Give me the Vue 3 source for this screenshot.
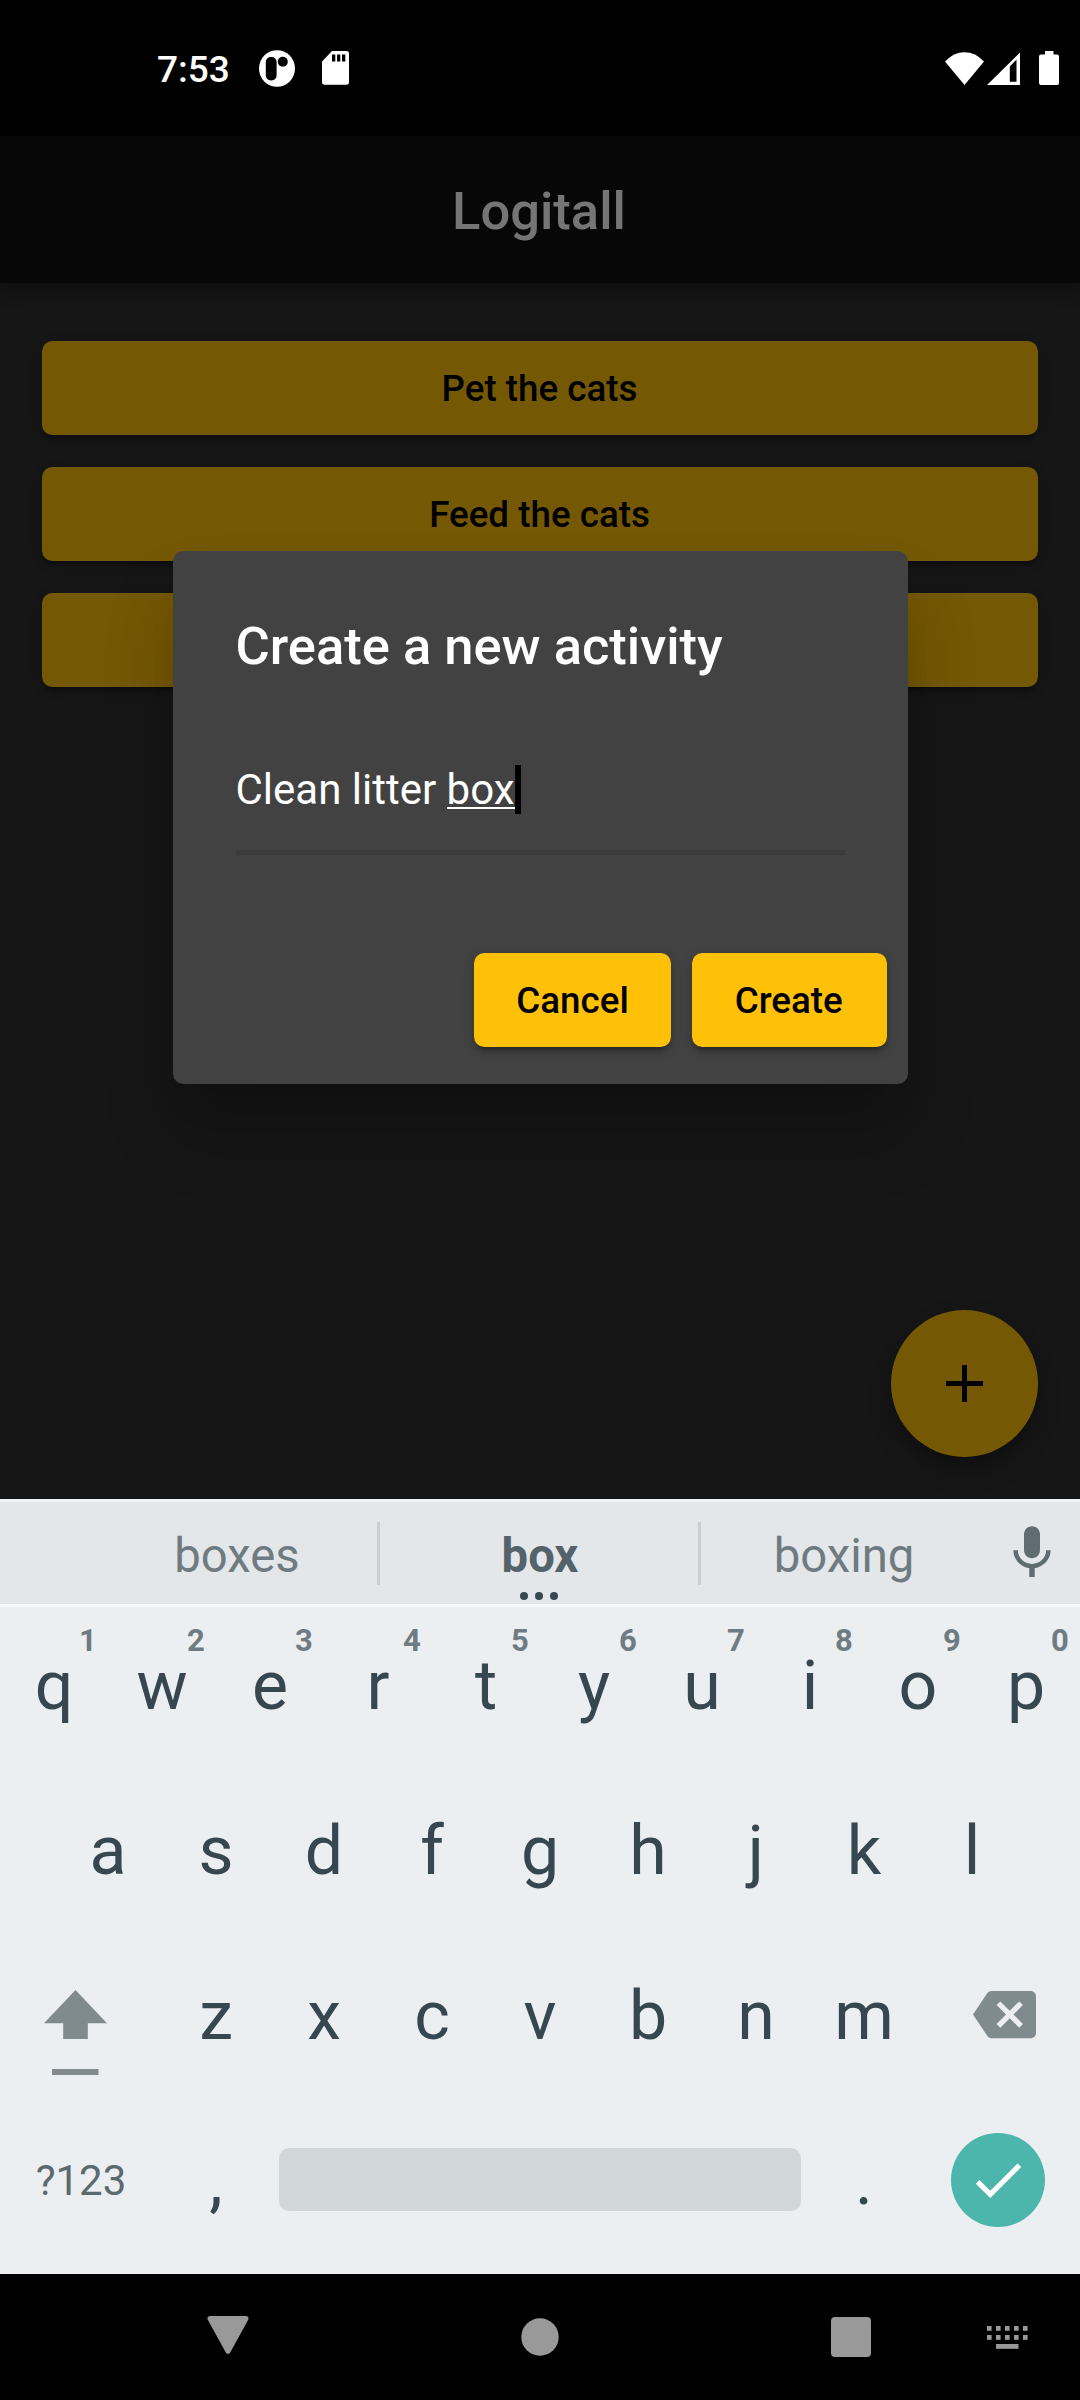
<script setup>
const activities = ['Pet the cats', 'Feed the cats', '']
const topRow = [...'qwertyuiop'].map((letter, i) => ({ letter, hint: (i + 1) % 10 }))
const homeRow = [...'asdfghjkl']
const bottomRow = [...'zxcvbnm']
</script>

<template>
  <div class="screen">
    <header class="status">
      <span class="clock">7:53</span>
      <svg class="ic-app" viewBox="0 0 36 37">
        <ellipse cx="18" cy="18.5" rx="18" ry="18.3" fill="#fff" />
        <rect x="6.8" y="7" width="10.8" height="23.4" rx="5" fill="#000" />
        <circle cx="23.8" cy="11.7" r="5" fill="#000" />
      </svg>
      <svg class="ic-sd" viewBox="0 0 27 34">
        <path d="M10 0H24.500Q27 0 27 2.500V31Q27 33.700 24.500 33.700H2.500Q0 33.700 0 31V10.500Z" fill="#fff" />
        <path d="M10 3.500h3.300v7H10zM15 3.500h3.300v7H15zM20 3.500h3.300v7H20z" fill="#000" />
      </svg>
      <span class="spacer"></span>
      <svg class="ic-wifi" viewBox="0 0 39 33">
        <path d="M19.500 33L0 9.500Q8.500 0.200 19.500 0.200T39 9.500Z" fill="#fff" />
      </svg>
      <svg class="ic-cell" viewBox="0 0 33 33">
        <path fill-rule="evenodd" d="M33 0.500V33H0ZM29.500 7.500L22.800 14.500V29.800H29.500Z" fill="#fff" />
      </svg>
      <svg class="ic-batt" viewBox="0 0 20 34">
        <path d="M6 0H14.500V3.500H18Q20 3.500 20 5.500V32Q20 34 18 34H2Q0 34 0 32V5.500Q0 3.500 2 3.500H6Z" fill="#fff" />
      </svg>
    </header>

    <main class="app">
      <div class="bar">Logitall</div>
      <div class="list">
        <div v-for="(name, i) in activities" :key="i" class="btn wide">{{ name }}</div>
      </div>
      <div class="fab">
        <svg viewBox="0 0 37 37"><path d="M16 0h5v16h16v5H21v16h-5V21H0v-5h16z" /></svg>
      </div>
      <div class="scrim">
        <section class="dialog">
          <h1>Create a new activity</h1>
          <div class="field">
            <span class="typed">Clean litter&nbsp;</span><span class="typed composing">box</span><i class="caret"></i>
          </div>
          <div class="actions">
            <div class="btn cancel">Cancel</div>
            <div class="btn create">Create</div>
          </div>
        </section>
      </div>
    </main>

    <section class="keyboard">
      <div class="suggestions">
        <span class="word">boxes</span>
        <i class="sep"></i>
        <span class="word best">box
          <svg class="dots" viewBox="0 0 38 8"><circle cx="4" cy="4" r="4" /><circle cx="19" cy="4" r="4" /><circle cx="34" cy="4" r="4" /></svg>
        </span>
        <i class="sep"></i>
        <span class="word">boxing</span>
        <svg class="mic" viewBox="0 0 24 24">
          <path d="M12 14c1.660 0 2.990-1.340 2.990-3L15 5c0-1.660-1.340-3-3-3S9 3.340 9 5v6c0 1.660 1.340 3 3 3zm5.300-3c0 3-2.540 5.100-5.300 5.100S6.700 14 6.700 11H5c0 3.410 2.720 6.230 6 6.720V21h2v-3.280c3.280-.48 6-3.300 6-6.720h-1.700z" />
        </svg>
      </div>
      <div class="keys">
        <div class="row">
          <div v-for="k in topRow" :key="k.letter" class="key">{{ k.letter }}<small>{{ k.hint }}</small></div>
        </div>
        <div class="row">
          <div v-for="k in homeRow" :key="k" class="key">{{ k }}</div>
        </div>
        <div class="row">
          <div class="key side shift">
            <svg viewBox="0 0 63 86"><path d="M31.500 0L63 33.300H43.800V49H19.200V33.300H0ZM8 79h46.500v6H8z" /></svg>
          </div>
          <div v-for="k in bottomRow" :key="k" class="key">{{ k }}</div>
          <div class="key side del">
            <svg viewBox="0 0 24 24"><path d="M22 3H7c-.69 0-1.230.35-1.590.88L0 12l5.410 8.110c.36.53.9.89 1.590.89h15c1.100 0 2-.9 2-2V5c0-1.100-.9-2-2-2zm-3 12.590L17.590 17 14 13.410 10.410 17 9 15.590 12.590 12 9 8.410 10.410 7 14 10.590 17.590 7 19 8.410 15.410 12 19 15.590z" /></svg>
          </div>
        </div>
        <div class="row">
          <div class="key side sym">?123</div>
          <div class="key">,</div>
          <div class="key space"><i></i></div>
          <div class="key">.</div>
          <div class="key side enter">
            <div class="round"><svg viewBox="0 0 24 24"><path d="M9 16.170L4.830 12l-1.420 1.410L9 19 21 7l-1.410-1.410z" /></svg></div>
          </div>
        </div>
      </div>
    </section>

    <nav class="nav">
      <svg class="back" viewBox="0 0 42 38"><path d="M3 2.500H39L21 35.300Z" stroke-width="5" stroke-linejoin="round" /></svg>
      <svg class="home" viewBox="0 0 38 38"><circle cx="19" cy="19" r="18.700" /></svg>
      <svg class="recent" viewBox="0 0 40 40"><rect width="40" height="40" rx="4" /></svg>
      <svg class="ime" viewBox="0 0 41 23">
        <g v-for="c in 5" :key="c">
          <rect :x="(c - 1) * 9" y="0" width="4.600" height="4.800" />
          <rect :x="(c - 1) * 9" y="9" width="4.600" height="4.800" />
        </g>
        <rect x="9" y="18" width="22.500" height="4.800" />
      </svg>
    </nav>
  </div>
</template>

<style>
body { margin: 0; background: #000; }
</style>

<style scoped>
.screen { width: 1080px; height: 2400px; display: flex; flex-direction: column; background: #000; font-family: Roboto, sans-serif; overflow: hidden; }
svg { display: block; flex: none; }

.status { height: 136px; display: flex; align-items: center; box-sizing: border-box; padding: 0 21px 0 157px; color: #fff; }
.clock { width: 102px; font-size: 37px; font-weight: 500; line-height: 44px; padding-top: 3px; white-space: nowrap; }
.ic-app { width: 36px; height: 37px; }
.ic-sd { width: 27px; height: 34px; margin-left: 27px; }
.spacer { flex: 1; }
.ic-wifi { width: 39px; height: 33px; margin-right: 3px; }
.ic-cell { width: 33px; height: 33px; margin-right: 19px; }
.ic-batt { width: 20px; height: 34px; }

.app { position: relative; height: 1363px; background: #303030; overflow: hidden; }
.bar { height: 147px; box-sizing: border-box; padding: 3px 2px 0 0; line-height: 144px; background: #101010; color: #fff; text-align: center; font-size: 52.5px; font-weight: 500; box-shadow: 0 5px 10px -2px rgba(0,0,0,.2), 0 10px 13px rgba(0,0,0,.14), 0 2px 26px rgba(0,0,0,.12); }
.list { display: flex; flex-direction: column; gap: 31.5px; padding: 57.5px 42px 0; }
.btn { height: 94.5px; box-sizing: border-box; line-height: 96.5px; border-radius: 10.5px; background: #ffc107; color: #000; text-align: center; font-size: 36.75px; font-weight: 500; box-shadow: 0 8px 3px -5px rgba(0,0,0,.2), 0 5px 5px rgba(0,0,0,.14), 0 3px 13px rgba(0,0,0,.12); }
.wide { padding-right: 1px; }
.fab { position: absolute; right: 42px; bottom: 42px; width: 147px; height: 147px; border-radius: 50%; background: #ffc107; display: flex; align-items: center; justify-content: center; box-shadow: 0 8px 13px -3px rgba(0,0,0,.2), 0 16px 26px rgba(0,0,0,.14), 0 3px 20px rgba(0,0,0,.08); }
.fab svg { width: 37px; height: 37px; }
.scrim { position: absolute; inset: 0; background: rgba(0,0,0,.54); display: flex; justify-content: center; align-items: flex-start; padding-top: 415px; }
.dialog { width: 735px; height: 532.5px; box-sizing: border-box; padding-top: 64px; border-radius: 10.5px; background: #424242; color: #fff; box-shadow: 0 29px 39px -18px rgba(0,0,0,.12), 0 50px 70px 0 rgba(0,0,0,.2); }
h1 { margin: 0 63px 87px; font-size: 52.5px; line-height: 63px; font-weight: 500; white-space: nowrap; }
.field { display: flex; margin: 0 63px; height: 49px; line-height: 49px; padding-bottom: 36px; border-bottom: 5.5px solid #3b3b3b; font-size: 42px; }
.composing { height: 41.500px; border-bottom: 2.500px solid #fff; }
.caret { width: 6px; height: 49px; background: #000; }
.actions { display: flex; justify-content: flex-end; gap: 21px; padding: 97.5px 21px 0 0; }
.cancel { width: 197px; }
.create { width: 194.500px; padding-right: 1px; }

.keyboard { height: 775px; background: #eceff1; }
.suggestions { height: 102px; display: flex; align-items: center; border-top: 3px solid #f1f2f3; border-bottom: 3px solid #f7f9fa; background: #e3e7e9; padding-left: 95px; }
.word { position: relative; box-sizing: border-box; width: 282px; text-align: center; font-size: 47.250px; line-height: 56px; padding: 5px 0 0 2px; color: #6f7b81; }
.word.best { width: 318px; font-weight: 700; color: #54626a; }
.word:nth-of-type(3) { width: 284px; }
.dots { position: absolute; left: 140px; top: 69.5px; width: 38px; height: 8px; fill: #37474f; }
.sep { width: 3px; height: 63px; background: #cbcfd1; }
.mic { width: 64px; height: 64px; margin-left: 15px; fill: #5f6c72; }
.keys { padding-top: 7px; }
.row { height: 165px; display: flex; justify-content: center; }
.key { position: relative; width: 108px; height: 144px; line-height: 144px; text-align: center; font-size: 68px; color: #37474f; }
.key small { position: absolute; left: 68px; top: 9px; width: 40px; font-size: 31px; line-height: 36px; font-weight: 700; color: #6f7b82; }
.side { width: 162px; display: flex; align-items: center; fill: #808b8f; }
.shift { align-items: flex-start; }
.shift svg { width: 63px; height: 86px; margin: 46px 0 0 44px; }
.del svg { width: 63px; height: 63px; margin: 0 0 3px 55px; }
.sym { justify-content: center; font-size: 42px; color: #5c696f; }
.space { width: 540px; display: flex; align-items: center; justify-content: center; }
.space i { width: 522px; height: 63px; margin-bottom: 3px; border-radius: 10px; background: #d1d6d9; }
.round { width: 94px; height: 94px; margin: 0 0 3px 33px; border-radius: 50%; background: #4db6ac; display: flex; align-items: center; justify-content: center; }
.round svg { width: 62px; height: 62px; margin-right: 1px; fill: #fff; }

.nav { height: 126px; display: flex; align-items: center; padding-left: 207px; fill: #999; }
.back { width: 42px; height: 38px; margin: 0 272px 5px 0; stroke: #999; }
.home { width: 38px; height: 38px; margin-right: 272px; }
.recent { width: 40px; height: 40px; margin-right: 116px; }
.ime { width: 41px; height: 23px; margin-top: 1px; }
</style>
